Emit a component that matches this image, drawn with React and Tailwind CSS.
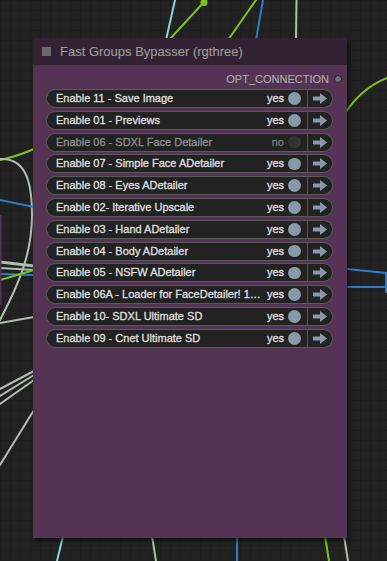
import React from 'react';

const groups = [
  { label: 'Enable 11 - Save Image', on: true },
  { label: 'Enable 01 - Previews', on: true },
  { label: 'Enable 06 - SDXL Face Detailer', on: false },
  { label: 'Enable 07 - Simple Face ADetailer', on: true },
  { label: 'Enable 08 - Eyes ADetailer', on: true },
  { label: 'Enable 02- Iterative Upscale', on: true },
  { label: 'Enable 03 - Hand ADetailer', on: true },
  { label: 'Enable 04 - Body ADetailer', on: true },
  { label: 'Enable 05 - NSFW ADetailer', on: true },
  { label: 'Enable 06A - Loader for FaceDetailer! 1\u2026', on: true },
  { label: 'Enable 10- SDXL Ultimate SD', on: true },
  { label: 'Enable 09 - Cnet Ultimate SD', on: true },
];

const Canvas = () => (
  <svg className="absolute inset-0" width="387" height="561" viewBox="0 0 387 561">
    <defs>
      <pattern id="grid" width="10" height="10" patternUnits="userSpaceOnUse">
        <path d="M10 0 H0 V10" fill="none" stroke="#1a1a1a" strokeWidth="1" />
      </pattern>
    </defs>
    <rect width="387" height="561" fill="#222222" />
    <rect width="387" height="561" fill="url(#grid)" />
    <g fill="none" strokeWidth="2" strokeLinecap="round">
      {/* top */}
      <path d="M175 0 L166 40" stroke="#8fd3cf" />
      <path d="M204 2 L169 40" stroke="#7cc416" />
      <path d="M256 0 L228 40" stroke="#7cc416" />
      <path d="M263 0 L256 40" stroke="#2f7ec4" />
      <path d="M296.5 0 L296 40" stroke="#b1bdaf" />
      {/* right */}
      <path d="M346 112 Q362 88 387 78" stroke="#7cc416" />
      <path d="M347 269 L386 273 L386 292" stroke="#2f7ec4" />
      <path d="M347 287 L387 287" stroke="#2f7ec4" />
      {/* bottom */}
      <path d="M63 536 L57 561" stroke="#8fd3cf" />
      <path d="M152 536 L156 561" stroke="#b1bdaf" />
      <path d="M237 536 L237 561" stroke="#2f7ec4" />
      <path d="M325 536 L329 561" stroke="#7cc416" />
      <path d="M344 536 L348 561" stroke="#b1bdaf" />
      {/* left */}
      <path d="M0 160 Q15 157 34 149" stroke="#7cc416" />
      <path d="M0 159 C24 158 32 178 32 215 C32 252 20 282 0 320" stroke="#b1bdaf" />
      <path d="M0 200 L34 207" stroke="#2f7ec4" />
      <path d="M0 262 L34 266" stroke="#b1bdaf" strokeWidth="3" />
      <path d="M0 268 L34 270" stroke="#b1bdaf" />
      <path d="M0 274 L34 275" stroke="#2f7ec4" />
      <path d="M0 280 L34 270" stroke="#7cc416" />
      <path d="M0 323 L34 317" stroke="#b1bdaf" />
      <path d="M0 389 L34 371" stroke="#b1bdaf" />
      <path d="M0 396 L34 375" stroke="#b1bdaf" />
      <path d="M0 404 L34 380" stroke="#b1bdaf" />
      <path d="M0 465 L34 410" stroke="#b1bdaf" />
    </g>
    <circle cx="204" cy="2.5" r="3.5" fill="#7cc416" />
    <rect x="0" y="215" width="1.5" height="90" fill="#553355" />
  </svg>
);

const Arrow = () => (
  <svg width="14" height="11" viewBox="0 0 14 11">
    <path d="M0 3.5 H7 V0 L14 5.5 L7 11 V7.5 H0 Z" fill="#8899aa" />
  </svg>
);

const GroupRow = ({ label, on }) => (
  <div className="flex items-center h-[19px] rounded-full border border-[#5a5a5a] bg-[#222222]">
    <div className="flex flex-1 min-w-0 items-center pl-[9px] pr-[6px]">
      <span
        className={`flex-1 truncate text-[11px] leading-none [-webkit-text-stroke:0.35px_currentColor] ${
          on ? 'text-[#dddddd]' : 'text-[#8a8a8a]'
        }`}
      >
        {label}
      </span>
      <span
        className={`ml-[4px] text-[11px] leading-none [-webkit-text-stroke:0.35px_currentColor] ${
          on ? 'text-[#dddddd]' : 'text-[#777777]'
        }`}
      >
        {on ? 'yes' : 'no'}
      </span>
      <span
        className={`ml-[4px] w-[12.5px] h-[12.5px] rounded-full ${on ? 'bg-[#8899aa]' : 'bg-[#333333]'}`}
      />
    </div>
    <div className="flex h-full w-[25px] items-center justify-center border-l border-[#555555]">
      <Arrow />
    </div>
  </div>
);

export default function App() {
  return (
    <div className="relative w-[387px] h-[561px] overflow-hidden font-['Liberation_Sans',Arial,sans-serif]">
      <Canvas />
      <div className="relative pl-[33px] pt-[38px]">
        <div className="flex flex-col w-[314px] h-[500px] bg-[#553355] shadow-[2px_3px_4px_rgba(0,0,0,0.5)]">
          <div className="flex items-center h-[27px] bg-[#332233] pl-[9px]">
            <span className="w-[9px] h-[9px] bg-[#6a6a6a]" />
            <span className="ml-[9px] text-[13px] leading-none text-[#9a9a9a] [-webkit-text-stroke:0.15px_currentColor]">
              Fast Groups Bypasser (rgthree)
            </span>
          </div>
          <div className="flex items-center justify-end h-[24px] pt-[4px] pr-[5px]">
            <span className="text-[11px] leading-none text-[#aaaaaa] [-webkit-text-stroke:0.15px_currentColor]">
              OPT_CONNECTION
            </span>
            <span className="ml-[5px] w-[8px] h-[8px] rounded-full bg-[#747484] border border-[#1e1e1e]" />
          </div>
          <div className="flex flex-col gap-[2.8px] pl-[13px] pr-[14.5px]">
            {groups.map((g) => (
              <GroupRow key={g.label} label={g.label} on={g.on} />
            ))}
          </div>
        </div>
      </div>
    </div>
  );
}
